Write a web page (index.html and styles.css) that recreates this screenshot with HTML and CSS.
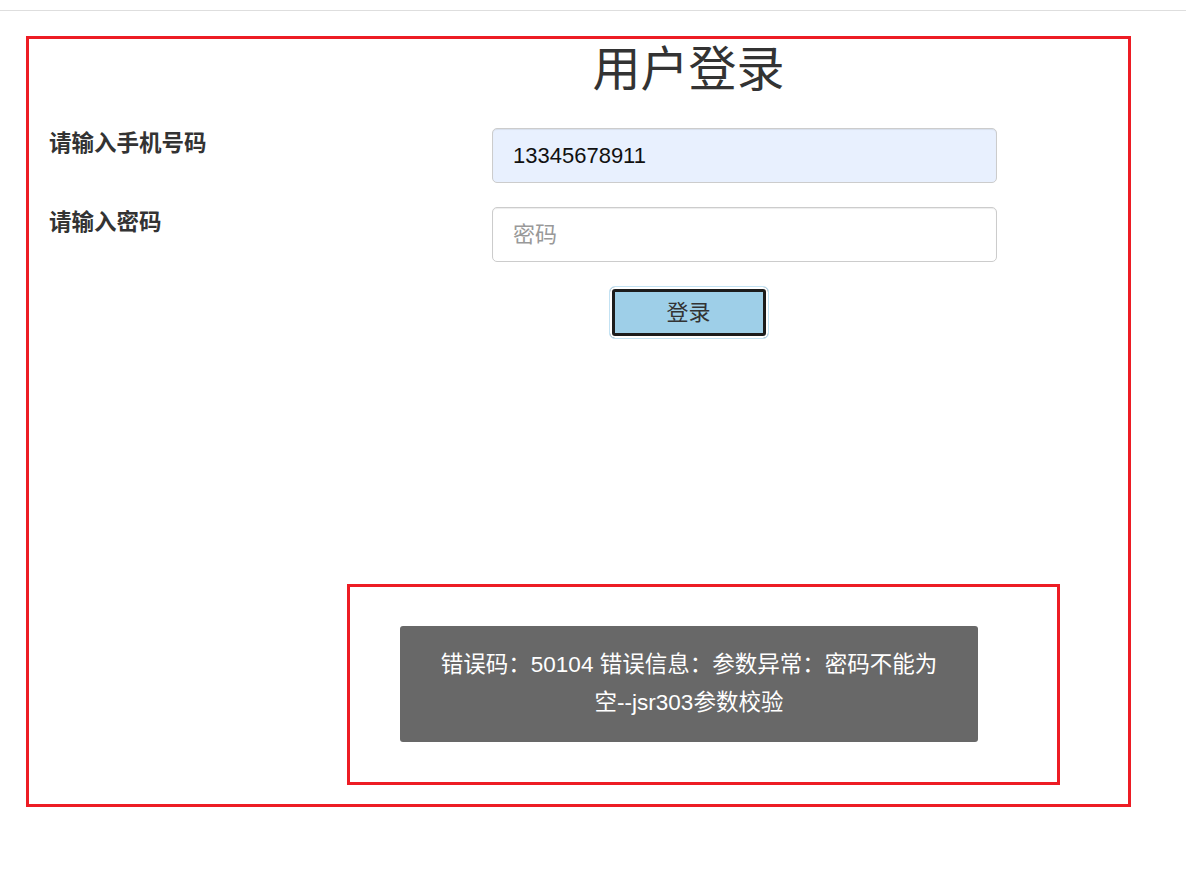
FILE: index.html
```html
<!DOCTYPE html>
<html lang="zh-CN">
<head>
<meta charset="utf-8">
<title>用户登录</title>
<link rel="stylesheet" href="styles.css">
</head>
<body>
<div class="topline"></div>
<div class="frame">
  <h1 class="title">用户登录</h1>
  <form class="form">
    <div class="row">
      <label class="label" for="mobile">请输入手机号码</label>
      <input class="input autofilled" id="mobile" type="text" value="13345678911">
    </div>
    <div class="row">
      <label class="label" for="password">请输入密码</label>
      <input class="input" id="password" type="password" placeholder="密码">
    </div>
    <div class="actions">
      <button class="btn" type="button">登录</button>
    </div>
  </form>
  <div class="msgbox">
    <div class="toast">错误码：50104 错误信息：参数异常：密码不能为<br>空--jsr303参数校验</div>
  </div>
</div>
</body>
</html>
```

FILE: styles.css
```css
html, body {
  margin: 0;
  padding: 0;
  background: #fff;
}

body {
  font-family: "Liberation Sans", "Noto Sans CJK SC", sans-serif;
  color: #333;
}

.topline {
  margin-top: 10px;
  height: 1px;
  background: #dedede;
}

.frame {
  box-sizing: border-box;
  margin: 25px 0 0 26px;
  width: 1105px;
  height: 771px;
  border: 3px solid #ed1c24;
}

.title {
  margin: 7px 0 0 220px;
  font-size: 48px;
  line-height: 48px;
  font-weight: normal;
  text-align: center;
  color: #333;
}

.form {
  margin: 34px 0 0 0;
  display: flex;
  flex-direction: column;
  gap: 24px;
}

.row {
  display: grid;
  grid-template-columns: 443px 505px;
  padding-left: 20px;
  align-items: start;
}

.label {
  margin-top: 5px;
  font-size: 22.5px;
  line-height: 22px;
  font-weight: bold;
  color: #333;
}

.input {
  box-sizing: border-box;
  width: 505px;
  height: 55px;
  margin: 0;
  padding: 0 20px;
  border: 1px solid #ccc;
  border-radius: 5px;
  background: #fff;
  box-shadow: inset 0 1px 1px rgba(0, 0, 0, 0.075);
  font-family: "Liberation Sans", "Noto Sans CJK SC", sans-serif;
  font-size: 22px;
  color: #111;
  outline: none;
}

.input::placeholder {
  color: #999;
}

.autofilled {
  background: #e8f0fe;
}

.actions {
  margin-left: 220px;
  display: flex;
  justify-content: center;
}

.btn {
  box-sizing: border-box;
  width: 160px;
  height: 53px;
  margin: 0;
  padding: 0 0 6px 0;
  border: 1px solid #c3e2f3;
  border-radius: 6px;
  background: #9ecfe8;
  box-shadow: inset 0 0 0 2px #fff, inset 0 0 0 5px #1c1c1c;
  font-family: "Liberation Sans", "Noto Sans CJK SC", sans-serif;
  font-size: 22px;
  color: #333;
}

.msgbox {
  box-sizing: border-box;
  margin: 245px 0 0 318px;
  width: 713px;
  height: 201px;
  border: 3px solid #ed1c24;
  padding: 39px 0 0 50px;
}

.toast {
  box-sizing: border-box;
  width: 578px;
  height: 116px;
  padding: 20px 10px;
  border-radius: 3px;
  background: #686868;
  color: #fff;
  font-size: 22.5px;
  line-height: 38px;
  text-align: center;
}
```
